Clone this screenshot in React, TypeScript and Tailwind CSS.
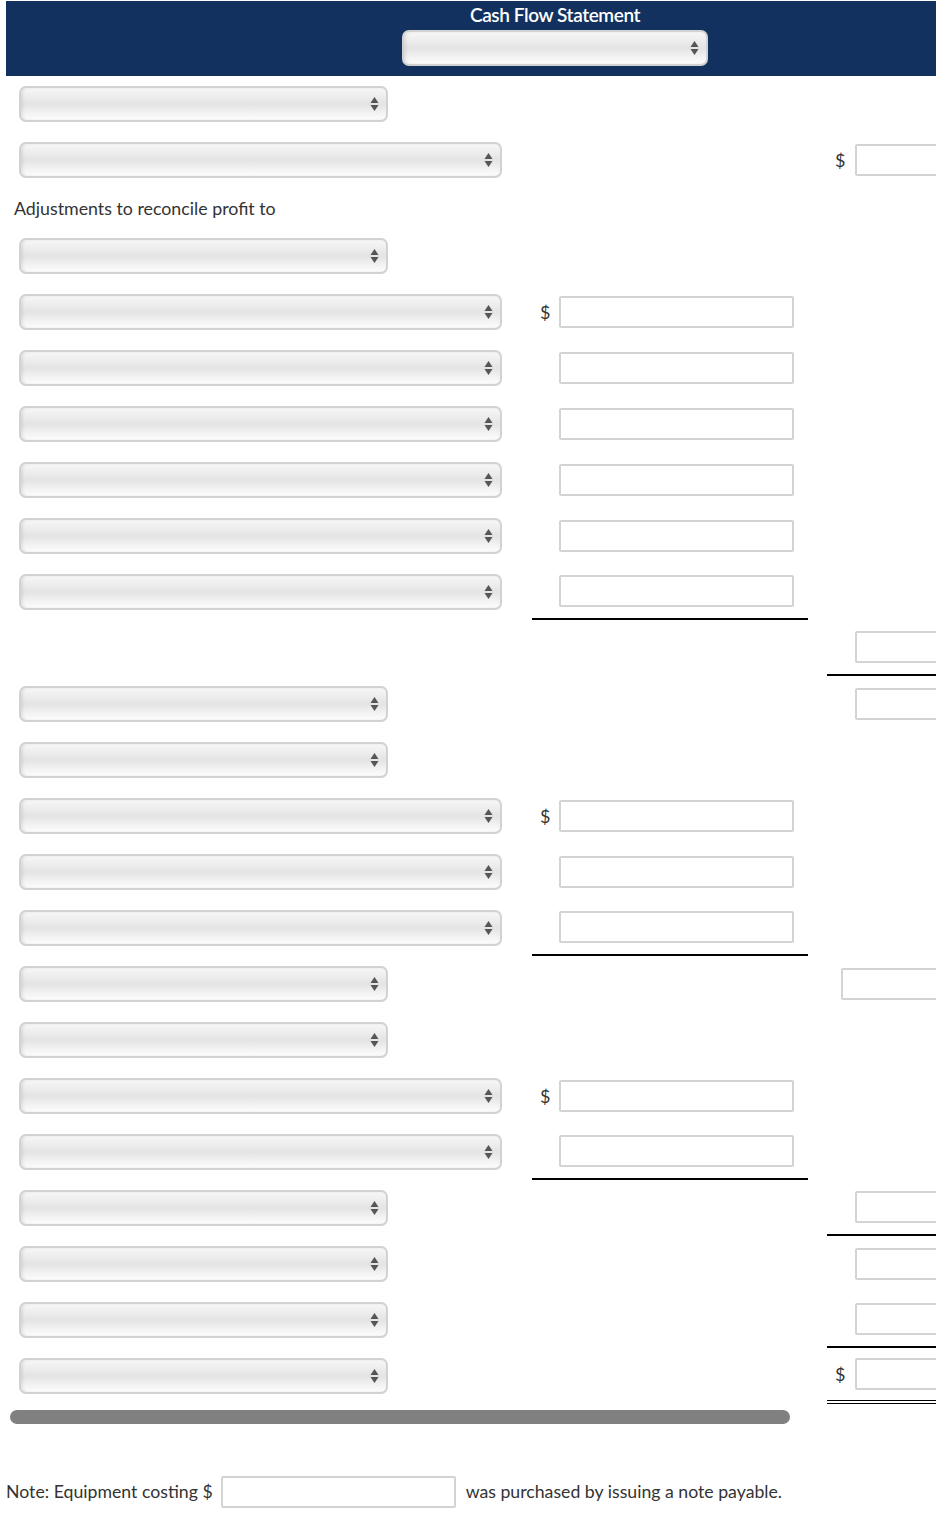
type Line = "single" | "double";

type Row = {
  kind: "short" | "long" | "text" | "none";
  label?: string;
  mid?: { dollar?: boolean; line?: boolean };
  right?: { dollar?: boolean; line?: Line; wide?: boolean };
};

const rows: Row[] = [
  { kind: "short" },
  { kind: "long", right: { dollar: true } },
  { kind: "text", label: "Adjustments to reconcile profit to" },
  { kind: "short" },
  { kind: "long", mid: { dollar: true } },
  { kind: "long", mid: {} },
  { kind: "long", mid: {} },
  { kind: "long", mid: {} },
  { kind: "long", mid: {} },
  { kind: "long", mid: { line: true } },
  { kind: "none", right: { line: "single" } },
  { kind: "short", right: {} },
  { kind: "short" },
  { kind: "long", mid: { dollar: true } },
  { kind: "long", mid: {} },
  { kind: "long", mid: { line: true } },
  { kind: "short", right: { wide: true } },
  { kind: "short" },
  { kind: "long", mid: { dollar: true } },
  { kind: "long", mid: { line: true } },
  { kind: "short", right: { line: "single" } },
  { kind: "short", right: {} },
  { kind: "short", right: { line: "single" } },
  { kind: "short", right: { dollar: true, line: "double" } },
];

function Arrows() {
  return (
    <svg width="9" height="16" viewBox="0 0 9 16" className="shrink-0">
      <path d="M4.5 1 L8.5 7 L0.5 7 Z" fill="#555" />
      <path d="M4.5 15 L8.5 9 L0.5 9 Z" fill="#555" />
    </svg>
  );
}

function Select({ width }: { width: string }) {
  return (
    <div
      className={`${width} h-[36px] rounded-[7px] border-2 border-[#d2d2d2] bg-linear-to-b from-[#f7f7f7] via-[#e4e4e4] to-[#fdfdfd] shadow-[inset_2px_0_3px_rgba(0,0,0,0.08)] flex items-center justify-end pr-[7px]`}
    >
      <Arrows />
    </div>
  );
}

function Input({ width }: { width: string }) {
  return <div className={`${width} h-[32px] shrink-0 border-2 border-[#d3d3d3] rounded-[2px] bg-white`} />;
}

export default function App() {
  return (
    <div className="w-[949px] min-h-[1513px] bg-white text-[#333] font-['Lato','Noto_Sans',sans-serif]">
      <div className="ml-[6px] w-[930px] overflow-hidden">
        {/* Header */}
        <div className="h-[75px] mt-[1px] bg-[#12315f] pl-[396px]">
          <div className="w-[306px] flex flex-col items-center">
            <div className="text-white text-[19px] font-semibold leading-[27px] tracking-[-0.4px]">Cash Flow Statement</div>
            <div className="mt-[2px]">
              <Select width="w-[306px]" />
            </div>
          </div>
        </div>

        {/* Statement rows */}
        <div className="w-[1110px] flex flex-col">
          {rows.map((r, i) => {
            if (r.kind === "text") {
              return (
                <div key={i} className="h-[40px] flex items-center pl-[8px] text-[17.8px]">
                  {r.label}
                </div>
              );
            }
            return (
              <div key={i} className="h-[56px] flex">
                <div className="w-[526px] pl-[13px] flex items-center">
                  {r.kind === "short" && <Select width="w-[369px]" />}
                  {r.kind === "long" && <Select width="w-[483px]" />}
                </div>
                <div className={`w-[276px] flex items-center ${r.mid?.line ? "border-b-2 border-black" : ""}`}>
                  {r.mid && (
                    <>
                      <span className="w-[27px] pl-[8px] text-[18px]">{r.mid.dollar ? "$" : ""}</span>
                      <Input width="w-[235px]" />
                    </>
                  )}
                </div>
                <div className="w-[19px]" />
                <div
                  className={`w-[260px] flex items-center ${
                    r.right?.line === "single"
                      ? "border-b-2 border-black"
                      : r.right?.line === "double"
                        ? "border-b-[4px] border-double border-black"
                        : ""
                  }`}
                >
                  {r.right && (
                    <>
                      <span className={`${r.right.wide ? "w-[14px]" : "w-[28px]"} pl-[8px] text-[18px]`}>
                        {r.right.dollar ? "$" : ""}
                      </span>
                      <Input width="w-[220px]" />
                    </>
                  )}
                </div>
              </div>
            );
          })}
        </div>
      </div>

      {/* Horizontal scrollbar */}
      <div className="ml-[10px] mt-[6px] w-[780px] h-[14px] rounded-full bg-[#808080]" />

      {/* Note */}
      <div className="mt-[52px] ml-[6px] flex items-center text-[17.7px]">
        <span>Note: Equipment costing $</span>
        <div className="ml-[8px]">
          <Input width="w-[235px]" />
        </div>
        <span className="ml-[10px]">was purchased by issuing a note payable.</span>
      </div>
    </div>
  );
}
